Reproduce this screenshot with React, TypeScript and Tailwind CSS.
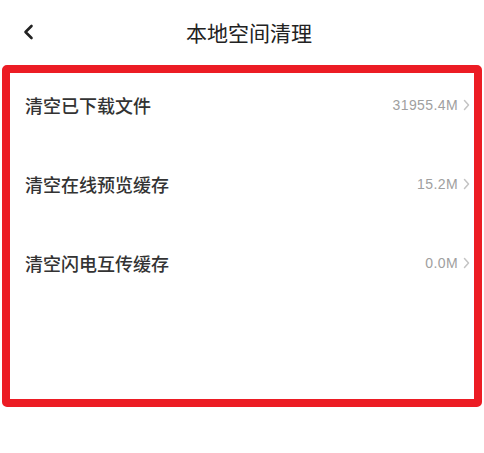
import React from 'react';

const rows = [
  { label: '清空已下载文件', size: '31955.4M' },
  { label: '清空在线预览缓存', size: '15.2M' },
  { label: '清空闪电互传缓存', size: '0.0M' },
];

const cjk = { fontFamily: '"Noto Sans CJK SC", "Noto Sans", sans-serif' };

export default function App() {
  return (
    <div className="w-[484px] h-[453px] bg-white overflow-hidden" style={cjk}>
      {/* Header */}
      <div className="relative h-[65px] flex items-center justify-center pl-[14px] pb-[1px]">
        <svg
          className="absolute left-[22px] top-[24px]"
          width="12"
          height="16"
          viewBox="0 0 12 16"
          fill="none"
        >
          <path d="M9.5 2L3.5 8L9.5 14" stroke="#222" strokeWidth="2.6" strokeLinecap="round" strokeLinejoin="round" />
        </svg>
        <span className="text-[21px] text-[#222] leading-none">本地空间清理</span>
      </div>

      {/* List */}
      <div className="mx-[2px] h-[342px] border-[8px] border-[#ec1c24] rounded-[5px] flex flex-col gap-[15px] pl-[15px] pr-[4px]">
        {rows.map((r) => (
          <div key={r.label} className="h-[64px] flex items-center justify-between">
            <span className="text-[18px] font-medium text-[#333] leading-none">{r.label}</span>
            <div className="flex items-center gap-[5px]">
              <span
                className="text-[14px] text-[#a0a0a0] tracking-[0.4px] leading-none"
                style={{ fontFamily: '"Liberation Sans", Arial, sans-serif' }}
              >
                {r.size}
              </span>
              <svg width="7" height="12" viewBox="0 0 7 12" fill="none">
                <path d="M1.5 1.5L5.5 6L1.5 10.5" stroke="#c4c4c4" strokeWidth="1.5" strokeLinecap="round" strokeLinejoin="round" />
              </svg>
            </div>
          </div>
        ))}
      </div>
    </div>
  );
}
